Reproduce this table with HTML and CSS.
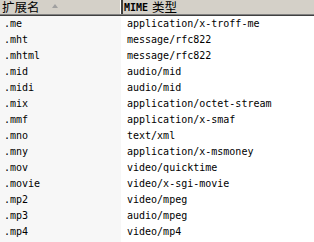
FILE: index.html
```html
<!DOCTYPE html>
<html lang="zh">
<head>
<meta charset="utf-8">
<link rel="stylesheet" href="styles.css">
</head>
<body>
<div class="list">
  <div class="head">
    <div class="hcell hcell-name"><span class="cjk">扩展名</span><span class="sort"></span></div>
    <div class="hcell hcell-type"><span class="hmono">MIME</span><span class="cjk">类型</span></div>
  </div>
  <div class="row"><div class="c1">.me</div><div class="c2">application/x-troff-me</div></div>
  <div class="row"><div class="c1">.mht</div><div class="c2">message/rfc822</div></div>
  <div class="row"><div class="c1">.mhtml</div><div class="c2">message/rfc822</div></div>
  <div class="row"><div class="c1">.mid</div><div class="c2">audio/mid</div></div>
  <div class="row"><div class="c1">.midi</div><div class="c2">audio/mid</div></div>
  <div class="row"><div class="c1">.mix</div><div class="c2">application/octet-stream</div></div>
  <div class="row"><div class="c1">.mmf</div><div class="c2">application/x-smaf</div></div>
  <div class="row"><div class="c1">.mno</div><div class="c2">text/xml</div></div>
  <div class="row"><div class="c1">.mny</div><div class="c2">application/x-msmoney</div></div>
  <div class="row"><div class="c1">.mov</div><div class="c2">video/quicktime</div></div>
  <div class="row"><div class="c1">.movie</div><div class="c2">video/x-sgi-movie</div></div>
  <div class="row"><div class="c1">.mp2</div><div class="c2">video/mpeg</div></div>
  <div class="row"><div class="c1">.mp3</div><div class="c2">audio/mpeg</div></div>
  <div class="row"><div class="c1">.mp4</div><div class="c2">video/mp4</div></div>
  <div class="row row-last"><div class="c1"></div><div class="c2"></div></div>
</div>
</body>
</html>
```
FILE: styles.css
```css
html, body {
  margin: 0;
  padding: 0;
  background: #ffffff;
}
.list {
  width: 314px;
  height: 242px;
  overflow: hidden;
  font-family: "DejaVu Sans Mono", "Liberation Mono", monospace;
  font-size: 10px;
  color: #000000;
}
.head {
  display: grid;
  grid-template-columns: 121px 1fr;
  height: 14px;
  background: #d4d0c8;
  border-bottom: 1px solid #808080;
  box-shadow: 0 1px 0 #404040;
  margin-bottom: 1px;
}
.hcell {
  display: flex;
  align-items: center;
  height: 14px;
  white-space: nowrap;
}
.hcell-name {
  padding-left: 2px;
  border-right: 1px solid #ffffff;
}
.hcell-type {
  border-left: 2px solid #404040;
  padding-left: 1px;
}
.cjk {
  font-family: "Noto Sans CJK SC", sans-serif;
  font-size: 12.5px;
  line-height: 14px;
  height: 14px;
  display: inline-block;
}
.hmono {
  font-weight: bold;
  margin-right: 4px;
}
.sort {
  width: 0;
  height: 0;
  margin-left: 12px;
  margin-top: -2px;
  border-left: 3.5px solid transparent;
  border-right: 3.5px solid transparent;
  border-bottom: 4px solid #a0a0a0;
}
.row {
  display: grid;
  grid-template-columns: 121px 1fr;
  height: 16px;
  line-height: 16px;
  white-space: nowrap;
}
.row-last {
  height: 2px;
}
.c1 {
  background: #f7f7f7;
  padding-left: 4px;
}
.c2 {
  padding-left: 6px;
}
```
